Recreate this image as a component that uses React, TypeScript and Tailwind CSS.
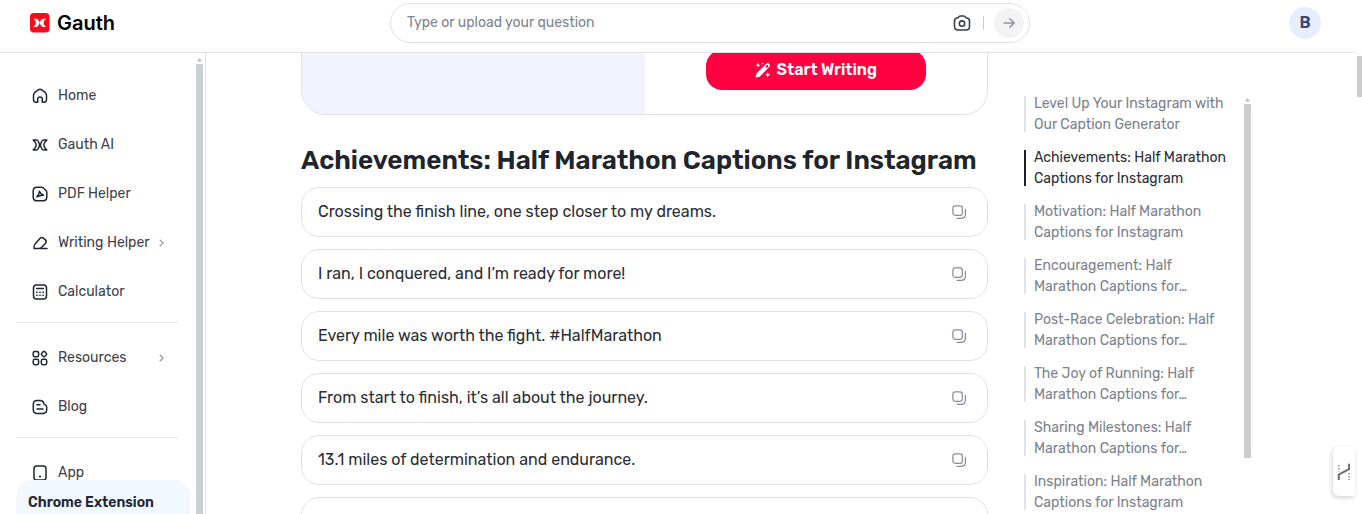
import type { ReactNode } from "react";

type IconProps = { children: ReactNode; className?: string };

function Icon({ children, className = "size-4" }: IconProps) {
  return (
    <svg
      viewBox="0 0 16 16"
      fill="none"
      stroke="currentColor"
      strokeWidth="1.5"
      strokeLinecap="round"
      strokeLinejoin="round"
      className={className}
      aria-hidden="true"
    >
      {children}
    </svg>
  );
}

const icons = {
  home: (
    <Icon>
      <path d="M4.8 14.2H3.9Q1.5 14.2 1.5 11.6V7.2Q1.5 5.7 2.6 4.7L6.3 1.9Q8 .8 9.7 1.9L13.4 4.7Q14.5 5.7 14.5 7.2V11.6Q14.5 14.2 12.1 14.2H10.3V10.8Q10.3 9 8 9T5.7 10.8V14.2Z" />
    </Icon>
  ),
  gauth: (
    <Icon>
      <path d="M1.2 3H4.4Q6.2 3.4 6.8 5.4L7.6 8 6.8 10.6Q6.2 12.6 4.4 13H1.2L3.6 10.3Q4.7 8 3.6 5.7Z" />
      <path d="M14.8 3H11.6Q9.8 3.4 9.2 5.4L8.4 8 9.2 10.6Q9.8 12.6 11.6 13H14.8L12.4 10.3Q11.3 8 12.4 5.7Z" />
    </Icon>
  ),
  pdf: (
    <Icon>
      <path d="M5 1.2H9.2Q10.5 1.2 11.4 2L13.8 4.2Q14.8 5.1 14.8 6.5V11Q14.8 14.8 11 14.8H5Q1.2 14.8 1.2 11V5Q1.2 1.2 5 1.2Z" />
      <path d="M4.8 10.9Q7.1 8.8 7.4 5.3Q8.6 8.6 11.6 9.2Q8 9 4.8 10.9Z" />
    </Icon>
  ),
  writing: (
    <Icon>
      <path d="M4.2 13.4H2Q1.4 11.2 3.1 9.1L8.1 3.3Q9.7 1.8 11.4 3.1L13.4 4.9Q15 6.5 13.6 8.3L9.8 12.2Q8.6 13.4 7 13.4Z" />
      <path d="M8 13.6H15" />
    </Icon>
  ),
  calculator: (
    <Icon>
      <rect x="1.5" y="1" width="13" height="14" rx="3" />
      <path d="M4.6 4.6H11.4" />
      <path d="M4.7 8.2H5.1M7.8 8.2H8.2M10.9 8.2H11.3M4.7 11.3H5.1M7.8 11.3H8.2M10.9 11.3H11.3" />
    </Icon>
  ),
  resources: (
    <Icon>
      <rect x="1.200" y="1.400" width="5.400" height="5.400" rx="1.600" />
      <rect x="1.200" y="9.300" width="5.400" height="5.400" rx="1.600" />
      <rect x="9.300" y="9.300" width="5.400" height="5.400" rx="1.600" />
      <path d="M11.3 1.6Q12 1 12.7 1.6L14.4 3.4Q15 4.1 14.4 4.8L12.7 6.5Q12 7.1 11.3 6.5L9.6 4.8Q9 4.1 9.6 3.4Z" />
    </Icon>
  ),
  blog: (
    <Icon>
      <path d="M5 1.4H8.4Q11.3 1.5 11.8 4.4Q11.9 5.5 13 5.7Q14.7 6.2 14.7 8.2V10.6Q14.7 14.6 10.7 14.6H5.2Q1.3 14.6 1.3 10.6V5.4Q1.3 1.4 5 1.4Z" />
      <path d="M5 5.8H8M5 10H11" />
    </Icon>
  ),
  app: (
    <Icon>
      <rect x="2" y="1" width="12" height="14" rx="2.6" />
      <path d="M7.9 11.5H8.1" strokeWidth="1.9" />
    </Icon>
  ),
};

type NavItem = { label: string; icon: ReactNode; more?: boolean };

const navGroups: NavItem[][] = [
  [
    { label: "Home", icon: icons.home },
    { label: "Gauth AI", icon: icons.gauth },
    { label: "PDF Helper", icon: icons.pdf },
    { label: "Writing Helper", icon: icons.writing, more: true },
    { label: "Calculator", icon: icons.calculator },
  ],
  [
    { label: "Resources", icon: icons.resources, more: true },
    { label: "Blog", icon: icons.blog },
  ],
  [{ label: "App", icon: icons.app }],
];

const captions = [
  "Crossing the finish line, one step closer to my dreams.",
  "I ran, I conquered, and I’m ready for more!",
  "Every mile was worth the fight. #HalfMarathon",
  "From start to finish, it’s all about the journey.",
  "13.1 miles of determination and endurance.",
];

const sections = [
  ["Level Up Your Instagram with", "Our Caption Generator"],
  ["Achievements: Half Marathon", "Captions for Instagram"],
  ["Motivation: Half Marathon", "Captions for Instagram"],
  ["Encouragement: Half", "Marathon Captions for…"],
  ["Post-Race Celebration: Half", "Marathon Captions for…"],
  ["The Joy of Running: Half", "Marathon Captions for…"],
  ["Sharing Milestones: Half", "Marathon Captions for…"],
  ["Inspiration: Half Marathon", "Captions for Instagram"],
];

function ScrollArrow() {
  return (
    <svg viewBox="0 0 7 4" className="h-1 w-[7px] shrink-0 fill-[#b9bbbf]" aria-hidden="true">
      <path d="M3.5 0L6 3.5H1Z" />
    </svg>
  );
}

function Header() {
  return (
    <header className="z-10 flex h-[53px] shrink-0 items-start border-b border-[#e1e2e5] bg-white pr-[34px] pl-[30px]">
      <div className="flex h-[45px] w-[360px] shrink-0 items-center">
        <a href="#" className="flex items-center gap-[7px] text-black">
          <svg viewBox="0 0 20 20" className="size-5" aria-hidden="true">
            <rect width="19.5" height="19.5" rx="4" fill="#f90b1c" />
            <path
              fill="#fff"
              d="M3.4 5.7H6Q8.3 5.8 9 8L9.7 9.8 10.4 8Q11.1 5.8 13.4 5.7H16L14.3 7.5Q12.9 9.8 14.3 12.1L16 13.9H13.4Q11.1 13.8 10.4 11.6L9.7 9.8 9 11.6Q8.3 13.8 6 13.9H3.4L5.1 12.1Q6.5 9.8 5.1 7.5Z"
            />
          </svg>
          <span className="font-[Inter] text-xl font-semibold">Gauth</span>
        </a>
      </div>
      <form
        className="mt-[3px] flex h-10 w-[640px] items-center rounded-full border border-[#e1e2e5] pr-[5px] pl-4"
        onSubmit={(event) => event.preventDefault()}
      >
        <input
          type="text"
          aria-label="Question"
          placeholder="Type or upload your question"
          className="min-w-0 flex-1 text-sm text-gray-800 outline-none placeholder:text-[#7d838f]"
        />
        <button type="button" aria-label="Upload a picture" className="text-[#3b3f48]">
          <svg
            viewBox="0 0 18 18"
            fill="none"
            stroke="currentColor"
            strokeWidth="1.6"
            strokeLinejoin="round"
            className="size-[18px]"
            aria-hidden="true"
          >
            <path d="M4.6 3.8Q5.4 3.7 5.9 2.9Q6.5 2 7.5 2H10.5Q11.5 2 12.1 2.9Q12.6 3.7 13.4 3.8Q16.5 4.1 16.5 7V12.5Q16.5 16 13 16H5Q1.5 16 1.5 12.5V7Q1.5 4.1 4.6 3.8Z" />
            <circle cx="9" cy="9.6" r="2.7" />
          </svg>
        </button>
        <span className="mr-[10px] ml-3 h-[14px] w-px bg-[#c9cbd0]" />
        <button
          type="submit"
          aria-label="Send"
          className="flex size-[30px] items-center justify-center rounded-full bg-[#f3f3f5] text-[#8f939c]"
        >
          <Icon>
            <path d="M3 8H13M8.8 3.8L13.2 8L8.8 12.2" />
          </Icon>
        </button>
      </form>
      <div className="flex h-[45px] flex-1 items-center justify-end">
        <button
          type="button"
          aria-label="Account B"
          className="flex size-8 items-center justify-center rounded-full bg-[#e8edfd] text-base font-semibold text-[#3a4680]"
        >
          B
        </button>
      </div>
    </header>
  );
}

function Sidebar() {
  return (
    <aside className="flex w-[206px] shrink-0 border-r border-[#e1e2e5]">
      <div className="flex min-w-0 flex-1 flex-col">
        <nav className="min-h-0 flex-1 overflow-hidden pt-[22px] pr-[18px] pl-4">
          {navGroups.map((group, index) => (
            <ul
              key={index}
              className={
                index === 0
                  ? "flex flex-col gap-2"
                  : "mt-[10px] flex flex-col gap-2 border-t border-[#e6e7ea] pt-[14px]"
              }
            >
              {group.map((item) => (
                <li key={item.label}>
                  <a
                    href="#"
                    className="flex h-[41px] items-center gap-[10px] pl-4 text-sm text-[#3f4249]"
                  >
                    <span className="shrink-0 text-[#22262f]">{item.icon}</span>
                    <span className="w-[93px] whitespace-nowrap">{item.label}</span>
                    {item.more && (
                      <svg
                        viewBox="0 0 5 8"
                        fill="none"
                        stroke="currentColor"
                        strokeWidth="1.2"
                        className="-ml-[2px] h-2 w-[5px] shrink-0 text-[#999ca3]"
                        aria-hidden="true"
                      >
                        <path d="M.7 .7L4.100 4L.7 7.300" />
                      </svg>
                    )}
                  </a>
                </li>
              ))}
            </ul>
          ))}
        </nav>
        <a
          href="#"
          className="mr-[6px] ml-4 flex h-[34px] shrink-0 items-center rounded-t-2xl bg-[#f2f8ff] px-3 pt-3 text-sm font-semibold text-[#222732]"
        >
          Chrome Extension
        </a>
      </div>
      <div className="mr-[2px] flex w-[7px] flex-col gap-[2px] pt-[5px]">
        <ScrollArrow />
        <div className="flex-1 bg-[#cccfd3]" />
      </div>
    </aside>
  );
}

function CaptionRow({ text }: { text?: string }) {
  return (
    <li className="flex h-[50px] shrink-0 items-center justify-between rounded-[18px] border border-[#e1e2e5] pr-5 pl-4">
      <span className="text-base text-[#2b2e35]">{text}</span>
      {text && (
        <button type="button" aria-label="Copy caption" className="text-[#858b9c]">
          <Icon>
            <rect x="1.9" y="1.9" width="9.4" height="9.4" rx="2.2" strokeWidth="1.2" />
            <path d="M14.4 5.4V10Q14.4 14.4 10 14.4H6.2" strokeWidth="1.2" />
          </Icon>
        </button>
      )}
    </li>
  );
}

function Article() {
  return (
    <article className="flex min-w-0 flex-1 flex-col">
      <div className="-mt-6 flex h-[86px] shrink-0 overflow-hidden rounded-3xl border border-[#e1e2e5]">
        <div className="flex-1 bg-[#f2f2fc]" />
        <div className="flex flex-1 items-end justify-center pb-6">
          <button
            type="button"
            className="flex h-10 w-[220px] items-center justify-center gap-[6px] rounded-2xl bg-[#ff0040] text-base font-semibold text-white"
          >
            <svg viewBox="0 0 16 16" className="size-4 fill-white" aria-hidden="true">
              <path
                fillRule="evenodd"
                d="M11.3 1.7Q12.5 .6 13.9 1.5Q15.6 3 14.6 4.5L5.4 13.9Q4.6 14.7 3.5 14.9L1 15.4Q.5 15.4 .6 14.9L1.2 12.5Q1.4 11.5 2.2 10.7ZM11.9 3L10.4 4.5L11.8 5.9L13.3 4.4Q13.7 3.7 13.2 3.2Q12.5 2.6 11.9 3Z"
              />
              <path d="M3 .6L3.7 2.5L5.6 3.2L3.7 3.9L3 5.8L2.3 3.9L.4 3.2L2.3 2.5Z" />
              <path d="M12.7 10L13.4 12L15.5 12.7L13.4 13.4L12.7 15.5L12 13.4L9.9 12.7L12 12Z" />
              <circle cx="7.5" cy="1.5" r=".8" />
            </svg>
            Start Writing
          </button>
        </div>
      </div>
      <h2 className="mt-7 mb-2 shrink-0 text-[26px] leading-9 font-semibold text-[#20242b]">
        Achievements: Half Marathon Captions for Instagram
      </h2>
      <ul className="flex flex-col gap-3">
        {captions.map((caption) => (
          <CaptionRow key={caption} text={caption} />
        ))}
        <CaptionRow />
      </ul>
    </article>
  );
}

function Contents() {
  return (
    <nav aria-label="Contents" className="mt-10 flex w-[227px] shrink-0 justify-between">
      <ul className="flex flex-col gap-3">
        {sections.map(([first, second], index) => (
          <li key={first}>
            <a
              href="#"
              className={
                index === 1
                  ? "flex items-center gap-2 text-[#2b2e35]"
                  : "flex items-center gap-2 text-[#7d828d]"
              }
            >
              <span className={index === 1 ? "h-9 w-[2px] bg-[#1b1e26]" : "h-9 w-[2px] bg-[#e0e2e6]"} />
              <span className="text-sm leading-[21px] whitespace-nowrap">
                {first}
                <br />
                {second}
              </span>
            </a>
          </li>
        ))}
      </ul>
      <div className="flex w-[7px] flex-col gap-[2px] pt-[5px]">
        <ScrollArrow />
        <div className="h-[354px] bg-[#cccdd1]" />
      </div>
    </nav>
  );
}

export default function App() {
  return (
    <div className="relative flex h-screen overflow-hidden bg-white font-[Rubik,Roboto,sans-serif]">
      <div className="flex min-w-0 flex-1 flex-col">
        <Header />
        <div className="flex min-h-0 flex-1">
          <Sidebar />
          <main className="flex min-w-0 flex-1 gap-9 overflow-hidden pr-[104px] pl-[95px]">
            <Article />
            <Contents />
          </main>
        </div>
      </div>
      <div className="flex w-[7px] flex-col items-end">
        <div className="mt-14 h-[41px] w-[5px] bg-[#cccdd1]" />
      </div>
      <button
        type="button"
        aria-label="Open assistant"
        className="absolute right-[7px] bottom-[18px] flex h-[49px] w-[22px] items-center justify-center rounded-l-md bg-white text-[#6d6f73] shadow-[-1px_2px_5px_rgba(0,0,0,0.18)]"
      >
        <svg viewBox="0 0 14 18" fill="none" stroke="currentColor" className="h-[18px] w-[14px]" aria-hidden="true">
          <path d="M1.8 17V11.7L12 6.2V.8" strokeWidth="2" />
          <path d="M1.8 2V8.5M12 10V17" strokeWidth="1.8" strokeDasharray="1.6 1.4" opacity=".65" />
        </svg>
      </button>
    </div>
  );
}
